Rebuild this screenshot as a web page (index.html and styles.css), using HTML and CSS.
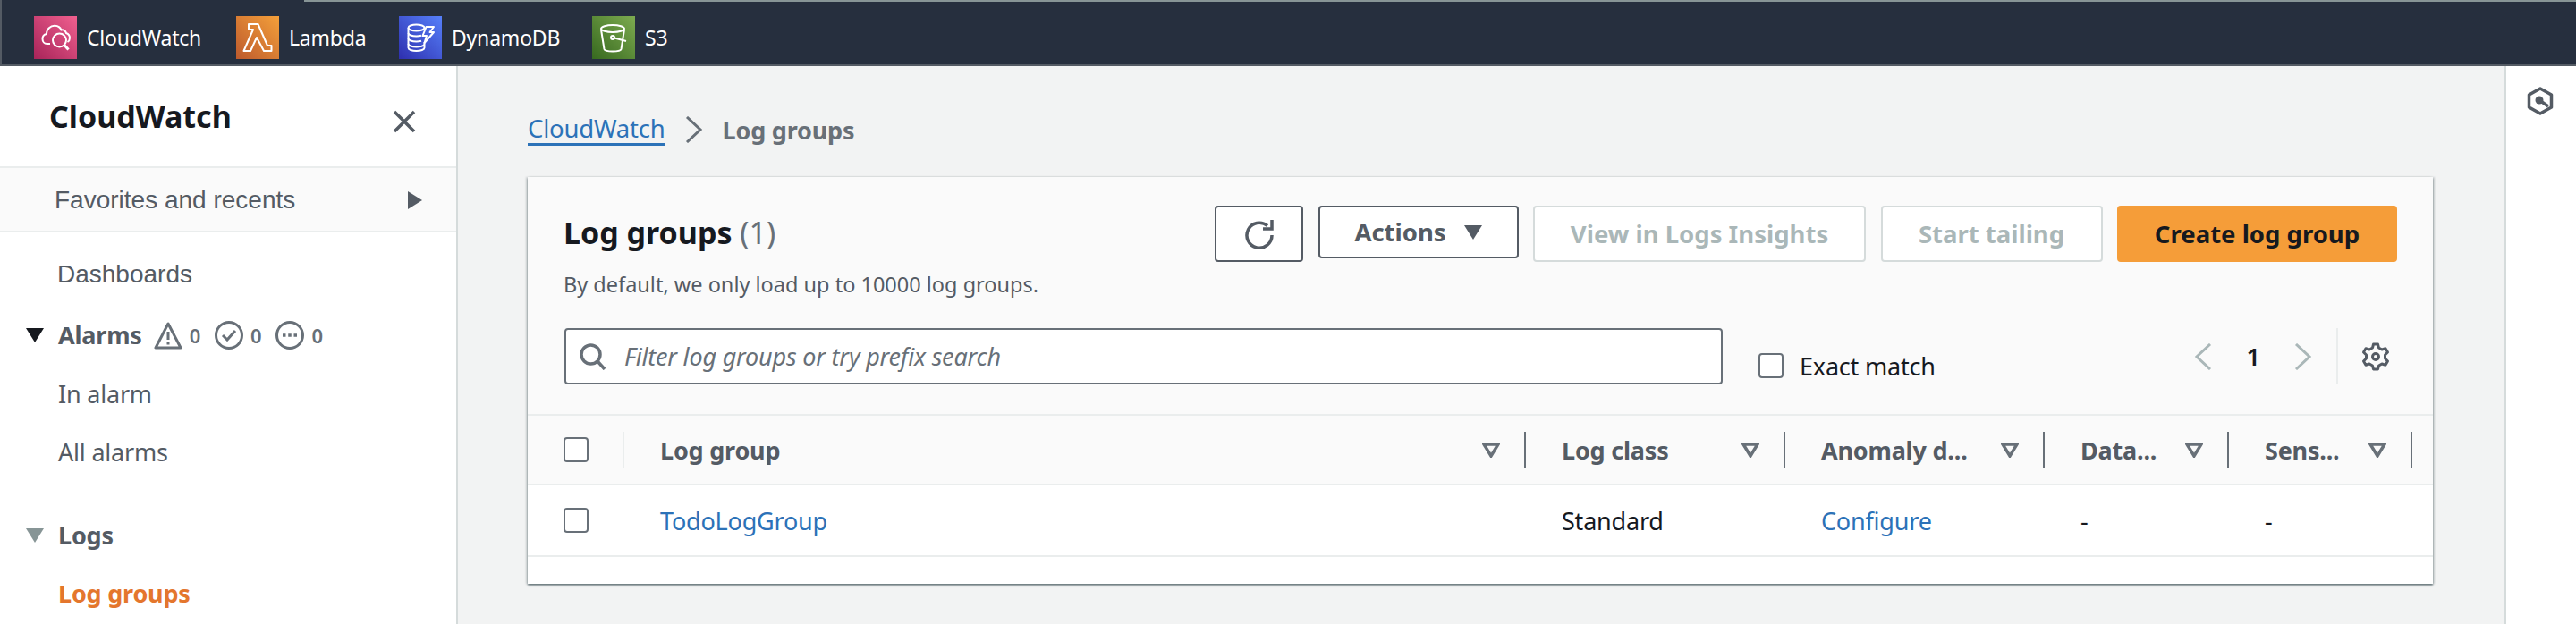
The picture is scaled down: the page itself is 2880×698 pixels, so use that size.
FILE: index.html
```html
<!DOCTYPE html>
<html lang="en">
<head>
    <meta charset="UTF-8">
    <meta name="viewport" content="width=device-width, initial-scale=1.0">
    <title>Log groups | CloudWatch</title>
    <link rel="stylesheet" href="styles.css">
</head>
<body>
    <header class="top-bar">
        <div class="top-strip"></div>
        <nav class="shortcuts">
            <a class="shortcut shortcut-cw">
                <svg class="service-icon" viewBox="0 0 48 48">
                    <defs><linearGradient id="gradCw" x1="0" y1="1" x2="1" y2="0"><stop offset="0" stop-color="#a82459"/><stop offset="1" stop-color="#f0608f"/></linearGradient></defs>
                    <rect width="48" height="48" fill="url(#gradCw)"/>
                    <g fill="none" stroke="#fff" stroke-width="2">
                        <path d="M18 31H14.500C11.500 31 9.500 28.500 9.500 25.500C9.500 22.500 11.500 20.500 14 20C14 14.500 18.500 10.500 23.500 10.800C27 11 29.500 13 30.500 15.500C33 14.800 35.500 16.500 36 19C38.500 20 40 22 40 24.500C40 26.500 39 28 37.500 29"/>
                        <circle cx="28.500" cy="27" r="7.500"/>
                        <path d="M34 32.500L38.500 37.500" stroke-width="3"/>
                    </g>
                </svg>
                <span>CloudWatch</span>
            </a>
            <a class="shortcut shortcut-lambda">
                <svg class="service-icon" viewBox="0 0 48 48">
                    <defs><linearGradient id="gradLambda" x1="0" y1="1" x2="1" y2="0"><stop offset="0" stop-color="#bd5a2d"/><stop offset="1" stop-color="#f4a03a"/></linearGradient></defs>
                    <rect width="48" height="48" fill="url(#gradLambda)"/>
                    <path d="M14 9V15H19L8.500 39H16L23 24L31 39H39.500V33H35L24.500 9Z" fill="none" stroke="#fff" stroke-width="2" stroke-linejoin="round"/>
                </svg>
                <span>Lambda</span>
            </a>
            <a class="shortcut shortcut-dynamo">
                <svg class="service-icon" viewBox="0 0 48 48">
                    <defs><linearGradient id="gradDynamo" x1="0" y1="1" x2="1" y2="0"><stop offset="0" stop-color="#2e2fae"/><stop offset="1" stop-color="#5680fa"/></linearGradient></defs>
                    <rect width="48" height="48" fill="url(#gradDynamo)"/>
                    <g fill="none" stroke="#fff" stroke-width="2" stroke-linejoin="round">
                        <ellipse cx="19.500" cy="13" rx="9" ry="3.500"/>
                        <path d="M10.500 13V19C10.500 21 14.500 22.500 19.500 22.500C21.500 22.500 23.500 22.300 25 21.800"/>
                        <path d="M10.500 19V25C10.500 27 14.500 28.500 19.500 28.500C21.500 28.500 23.500 28.300 25 27.800"/>
                        <path d="M10.500 25V31C10.500 33 14.500 34.500 19.500 34.500C23.500 34.500 27 33.500 28.500 32"/>
                        <path d="M10.500 31V35.500C10.500 37.500 14.500 39 19.500 39C24.500 39 28.500 37.500 28.500 35.500V29"/>
                        <path d="M30.500 12L26.500 22H31L28.500 30L39 18H34.500L39 12Z"/>
                    </g>
                </svg>
                <span>DynamoDB</span>
            </a>
            <a class="shortcut shortcut-s3">
                <svg class="service-icon" viewBox="0 0 48 48">
                    <defs><linearGradient id="gradS3" x1="0" y1="1" x2="1" y2="0"><stop offset="0" stop-color="#37691f"/><stop offset="1" stop-color="#7dab50"/></linearGradient></defs>
                    <rect width="48" height="48" fill="url(#gradS3)"/>
                    <g fill="none" stroke="#fff" stroke-width="2">
                        <ellipse cx="23" cy="14" rx="13" ry="4"/>
                        <path d="M10 15L13.500 37C14 38.500 17 39.500 23 39.500C29 39.500 32 38.500 32.500 37L36 15"/>
                        <circle cx="23" cy="24" r="2"/>
                        <path d="M25 24.500L38 28"/>
                    </g>
                </svg>
                <span>S3</span>
            </a>
        </nav>
    </header>

    <div class="layout">
        <aside class="sidebar">
            <div class="sidebar-head">
                <h2>CloudWatch</h2>
                <svg class="close-icon" viewBox="0 0 26 26"><path d="M2 2L24 24M24 2L2 24" fill="none" stroke="#545b64" stroke-width="3.500"/></svg>
            </div>
            <div class="favorites">
                <span>Favorites and recents</span>
                <span class="caret-right"></span>
            </div>
            <ul class="nav-list">
                <li class="nav-item nav-plain">Dashboards</li>
                <li class="nav-item nav-section nav-alarms">
                    <span class="caret-down"></span>
                    <span class="nav-section-name">Alarms</span>
                    <span class="alarm-counts">
                        <svg viewBox="0 0 32 32"><path d="M16 3L2 30H30Z" fill="none" stroke="#687078" stroke-width="3" stroke-linejoin="round"/><rect x="14.500" y="12" width="3" height="9" fill="#687078"/><rect x="14.500" y="23" width="3" height="3.500" fill="#687078"/></svg>
                        <b>0</b>
                        <svg viewBox="0 0 32 32"><circle cx="16" cy="16" r="14.500" fill="none" stroke="#687078" stroke-width="3"/><path d="M9 16L14 21L23 11" fill="none" stroke="#687078" stroke-width="3"/></svg>
                        <b>0</b>
                        <svg viewBox="0 0 32 32"><circle cx="16" cy="16" r="14.500" fill="none" stroke="#687078" stroke-width="3"/><path d="M8 16H24" fill="none" stroke="#687078" stroke-width="3.500" stroke-dasharray="3.500 2.750"/></svg>
                        <b>0</b>
                    </span>
                </li>
                <li class="nav-item nav-sub">In alarm</li>
                <li class="nav-item nav-sub">All alarms</li>
                <li class="nav-item nav-section nav-logs">
                    <span class="caret-down caret-muted"></span>
                    <span class="nav-section-name">Logs</span>
                </li>
                <li class="nav-item nav-sub nav-active">Log groups</li>
            </ul>
        </aside>

        <main class="content">
            <div class="breadcrumbs">
                <a class="crumb-link">CloudWatch</a>
                <svg class="crumb-sep" viewBox="0 0 20 30"><path d="M2 1L17 15L2 29" fill="none" stroke="#687078" stroke-width="3"/></svg>
                <span class="crumb-current">Log groups</span>
            </div>

            <section class="card">
                <div class="card-head">
                    <div class="card-title">
                        <h1>Log groups <span class="count">(1)</span></h1>
                        <p>By default, we only load up to 10000 log groups.</p>
                    </div>
                    <div class="actions">
                        <button class="btn btn-icon">
                            <svg viewBox="0 0 34 34"><path d="M26 7.500A14 14 0 1 0 31 18" fill="none" stroke="#545b64" stroke-width="3.500"/><path d="M21 11H31V1" fill="none" stroke="#545b64" stroke-width="3.500"/></svg>
                        </button>
                        <button class="btn btn-actions">Actions <span class="caret-down caret-btn"></span></button>
                        <button class="btn btn-disabled btn-insights">View in Logs Insights</button>
                        <button class="btn btn-disabled btn-tail">Start tailing</button>
                        <button class="btn btn-primary">Create log group</button>
                    </div>
                </div>

                <div class="filter-row">
                    <label class="search-box">
                        <svg viewBox="0 0 30 30"><circle cx="12.500" cy="12.500" r="10.500" fill="none" stroke="#687078" stroke-width="3.500"/><path d="M20 20L28 29" fill="none" stroke="#687078" stroke-width="3.500"/></svg>
                        <span>Filter log groups or try prefix search</span>
                    </label>
                    <label class="exact-match"><span class="checkbox"></span>Exact match</label>
                    <div class="pager">
                        <svg class="pager-arrow" viewBox="0 0 20 30"><path d="M18 1L3 15L18 29" fill="none" stroke="#aab7b8" stroke-width="3"/></svg>
                        <span class="page-num">1</span>
                        <svg class="pager-arrow" viewBox="0 0 20 30"><path d="M2 1L17 15L2 29" fill="none" stroke="#aab7b8" stroke-width="3"/></svg>
                    </div>
                    <div class="settings">
                        <svg viewBox="0 0 32 32"><path d="M13.500 2H18.500L19.500 6L23 8L27 6.800L29.500 11L26.500 14V18L29.500 21L27 25.200L23 24L19.500 26L18.500 30H13.500L12.500 26L9 24L5 25.200L2.500 21L5.500 18V14L2.500 11L5 6.800L9 8L12.500 6Z" fill="none" stroke="#545b64" stroke-width="3" stroke-linejoin="round"/><circle cx="16" cy="16" r="3.500" fill="none" stroke="#545b64" stroke-width="3"/></svg>
                    </div>
                </div>

                <div class="table-row table-head">
                    <div class="cell cell-check cell-faint"><span class="checkbox"></span></div>
                    <div class="cell"><span>Log group</span><svg class="filter-mark" viewBox="0 0 20 17"><path d="M2 2H18L10 15Z" fill="none" stroke="#687078" stroke-width="3.500"/></svg></div>
                    <div class="cell"><span>Log class</span><svg class="filter-mark" viewBox="0 0 20 17"><path d="M2 2H18L10 15Z" fill="none" stroke="#687078" stroke-width="3.500"/></svg></div>
                    <div class="cell"><span>Anomaly d...</span><svg class="filter-mark" viewBox="0 0 20 17"><path d="M2 2H18L10 15Z" fill="none" stroke="#687078" stroke-width="3.500"/></svg></div>
                    <div class="cell"><span>Data...</span><svg class="filter-mark" viewBox="0 0 20 17"><path d="M2 2H18L10 15Z" fill="none" stroke="#687078" stroke-width="3.500"/></svg></div>
                    <div class="cell"><span>Sens...</span><svg class="filter-mark" viewBox="0 0 20 17"><path d="M2 2H18L10 15Z" fill="none" stroke="#687078" stroke-width="3.500"/></svg></div>
                </div>
                <div class="table-row table-body">
                    <div class="cell cell-check"><span class="checkbox"></span></div>
                    <div class="cell"><a class="link">TodoLogGroup</a></div>
                    <div class="cell">Standard</div>
                    <div class="cell"><a class="link">Configure</a></div>
                    <div class="cell">-</div>
                    <div class="cell">-</div>
                </div>
                <div class="card-foot"></div>
            </section>
        </main>

        <aside class="tools">
            <svg viewBox="0 0 30 32"><path d="M15 2L27.500 9V23L15 30L2.500 23V9Z" fill="none" stroke="#545b64" stroke-width="3.500" stroke-linejoin="round"/><circle cx="14" cy="15" r="4.500" fill="#545b64"/><path d="M14 15L24 22" stroke="#545b64" stroke-width="3.500"/></svg>
        </aside>
    </div>
</body>
</html>
```

FILE: styles.css
```css
/* General styles */
* {
    box-sizing: border-box;
}

html, body {
    margin: 0;
    padding: 0;
    height: 100%;
}

body {
    font-family: "Noto Sans", Arial, sans-serif;
    font-size: 27px;
    letter-spacing: -0.2px;
    color: #16191f;
    background-color: #fff;
    overflow: hidden;
}

h1, h2, p, ul {
    margin: 0;
    padding: 0;
}

svg {
    display: block;
    flex: none;
}

/* Top bar */
.top-bar {
    height: 74px;
    background-color: #262f3e;
    border-bottom: 2px solid #545b64;
    border-left: 2px solid #545b64;
}

.top-strip {
    height: 2px;
    margin-left: 338px;
    background-color: #879596;
}

.shortcuts {
    display: flex;
    align-items: center;
    padding: 16px 0 0 36px;
}

.shortcut {
    display: flex;
    align-items: center;
    gap: 11px;
    color: #fff;
    font-size: 23px;
}

.service-icon {
    width: 48px;
    height: 48px;
}

.shortcut-cw { width: 226px; }
.shortcut-lambda { width: 182px; }
.shortcut-dynamo { width: 216px; }

/* Sidebar */
.layout {
    display: flex;
    height: 624px;
}

.sidebar {
    flex: none;
    width: 512px;
    background-color: #fff;
    border-right: 2px solid #d5dbdb;
}

.sidebar-head {
    display: flex;
    align-items: center;
    justify-content: space-between;
    height: 112px;
    padding: 0 45px 0 55px;
}

.sidebar-head h2 {
    font-size: 34px;
    font-weight: 700;
    letter-spacing: 0;
}

.close-icon {
    width: 26px;
    height: 26px;
    margin-top: 12px;
}

.favorites {
    display: flex;
    align-items: center;
    justify-content: space-between;
    height: 74px;
    padding: 2px 38px 0 61px;
    font-family: "Liberation Sans", Arial, sans-serif;
    font-size: 28px;
    letter-spacing: 0;
    color: #545b64;
    background-color: #fafafa;
    border-top: 2px solid #eaeded;
    border-bottom: 2px solid #eaeded;
}

.caret-right {
    width: 0;
    height: 0;
    border-top: 10px solid transparent;
    border-bottom: 10px solid transparent;
    border-left: 16px solid #545b64;
}

.caret-down {
    flex: none;
    width: 0;
    height: 0;
    border-left: 10px solid transparent;
    border-right: 10px solid transparent;
    border-top: 16px solid #16191f;
}

.caret-muted {
    border-top-color: #879596;
}

.nav-list {
    list-style: none;
    padding-top: 14px;
    color: #545b64;
}

.nav-item {
    display: flex;
    align-items: center;
    height: 65px;
    padding-left: 65px;
}

.nav-plain {
    padding-left: 64px;
    font-family: "Liberation Sans", Arial, sans-serif;
    font-size: 28px;
    letter-spacing: 0;
}

.nav-section {
    padding-left: 29px;
    font-weight: 700;
    gap: 16px;
}

.nav-alarms { margin: 3px 0 1px; }
.nav-logs { margin-top: 28px; }

.alarm-counts {
    display: flex;
    align-items: center;
    margin-left: -3px;
    font-size: 22px;
    color: #687078;
}

.alarm-counts svg {
    width: 32px;
    height: 32px;
}

.alarm-counts b {
    margin: 0 16px 0 8px;
    font-weight: 600;
}

.nav-active {
    color: #e4762d;
    font-weight: 700;
}

/* Main content */
.content {
    flex: 1;
    padding: 53px 80px 0 78px;
    background-color: #f2f3f3;
}

.breadcrumbs {
    display: flex;
    align-items: center;
    height: 36px;
    gap: 22px;
}

.crumb-link {
    color: #2c72b8;
    font-size: 27.500px;
    border-bottom: 3px solid #2c72b8;
    line-height: 33px;
}

.crumb-sep {
    width: 20px;
    height: 30px;
}

.crumb-current {
    color: #687078;
    font-weight: 700;
}

.card {
    margin-top: 35px;
    background-color: #fff;
    box-shadow: 0 2px 2px 0 rgba(0, 28, 36, 0.5), 2px 0 2px 0 rgba(0, 28, 36, 0.15), -2px 0 2px 0 rgba(0, 28, 36, 0.15);
}

.card-head {
    display: flex;
    justify-content: space-between;
    padding: 32px 40px 0 40px;
    background-color: #fafafa;
    height: 169px;
}

.card-title h1 {
    font-size: 34px;
    font-weight: 700;
    letter-spacing: 0;
    line-height: 46px;
    margin-top: 7px;
}

.count {
    font-weight: 400;
    color: #687078;
}

.card-title p {
    margin-top: 19px;
    font-size: 23.500px;
    letter-spacing: 0;
    line-height: 32px;
    color: #545b64;
}

.actions {
    display: flex;
    align-items: flex-start;
    gap: 16.500px;
}

/* Buttons */
.btn {
    display: flex;
    align-items: center;
    justify-content: center;
    height: 63px;
    padding: 0;
    font-family: inherit;
    font-size: 27.500px;
    font-weight: 700;
    color: #545b64;
    background-color: #fff;
    border: 2px solid #545b64;
    border-radius: 4px;
}

.btn-icon {
    width: 99px;
}

.btn-icon svg {
    width: 34px;
    height: 34px;
}

.btn-actions {
    width: 224px;
    height: 59px;
    gap: 20px;
}

.caret-btn {
    border-top-color: #545b64;
}

.btn-disabled {
    color: #aab7b8;
    border-color: #d5dbdb;
}

.btn-insights { width: 372px; }
.btn-tail { width: 248px; }

.btn-primary {
    width: 313px;
    color: #16191f;
    background-color: #f59d39;
    border-color: #f59d39;
}

/* Filter row */
.filter-row {
    display: flex;
    align-items: flex-start;
    height: 96px;
    padding-left: 41px;
    background-color: #fafafa;
}

.search-box {
    display: flex;
    align-items: center;
    gap: 20px;
    width: 1295px;
    height: 63px;
    padding-left: 15px;
    font-style: italic;
    color: #687078;
    background-color: #fff;
    border: 2px solid #687078;
    border-radius: 4px;
}

.search-box svg {
    width: 30px;
    height: 30px;
}

.checkbox {
    display: block;
    flex: none;
    width: 28px;
    height: 28px;
    background-color: #fff;
    border: 2px solid #687078;
    border-radius: 4px;
}

.exact-match {
    display: flex;
    align-items: center;
    gap: 18px;
    width: 487px;
    height: 36px;
    margin: 24px 0 0 40px;
}

.pager {
    display: flex;
    align-items: center;
    height: 63px;
}

.pager-arrow {
    width: 20px;
    height: 30px;
}

.page-num {
    width: 92px;
    font-weight: 600;
    text-align: center;
}

.settings {
    display: flex;
    align-items: center;
    height: 63px;
    margin-left: 27px;
    padding-left: 26px;
    border-left: 2px solid #eaeded;
}

.settings svg {
    width: 32px;
    height: 32px;
}

/* Table */
.table-row {
    display: grid;
    grid-template-columns: 108px 1008px 290px 290px 206px 205px;
    align-items: center;
    border-top: 2px solid #eaeded;
}

.table-head {
    height: 78px;
    font-weight: 700;
    color: #545b64;
    background-color: #fafafa;
}

.table-body {
    height: 80px;
}

.cell {
    display: flex;
    align-items: center;
    height: 40px;
    padding-left: 40px;
}

.table-head .cell {
    justify-content: space-between;
    padding-right: 27px;
    border-right: 2px solid #687078;
}

.table-head .cell-faint {
    padding-right: 0;
    border-right-color: #eaeded;
}

.filter-mark {
    width: 20px;
    height: 17px;
}

.link {
    color: #2c72b8;
}

.card-foot {
    height: 32px;
    border-top: 2px solid #eaeded;
}

/* Tools panel */
.tools {
    flex: none;
    width: 80px;
    padding: 23px 0 0 23px;
    background-color: #fff;
    border-left: 2px solid #d5dbdb;
}

.tools svg {
    width: 30px;
    height: 32px;
}
```
